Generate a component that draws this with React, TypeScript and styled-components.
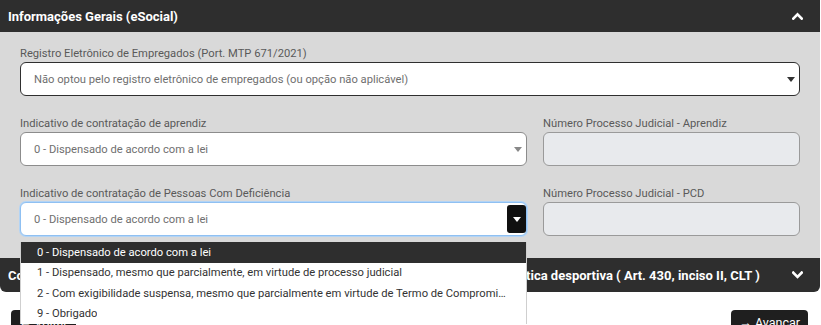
import React from "react";
import styled, { createGlobalStyle, css } from "styled-components";

const GlobalStyle = createGlobalStyle`
  html, body { margin: 0; padding: 0; background: #ffffff; }
  body { font-family: Roboto, "Liberation Sans", Arial, sans-serif; overflow: hidden; }
  * { box-sizing: border-box; }
`;

const Page = styled.div`
  width: 820px;
  display: flex;
  flex-direction: column;
`;

const Section = styled.section`
  display: flex;
  flex-direction: column;
`;

const SectionHeader = styled.div<{ $rounded?: boolean; $h: number }>`
  height: ${(p) => p.$h}px;
  background: #2e2e2e;
  color: #ffffff;
  display: flex;
  align-items: center;
  justify-content: space-between;
  padding: 0 17px 0 8px;
  ${(p) =>
    p.$rounded &&
    css`
      border-radius: 0 0 6px 6px;
    `}
`;

const HeaderTitle = styled.span`
  font-size: 13px;
  font-weight: 700;
  white-space: nowrap;
  overflow: hidden;
`;

const SectionBody = styled.div`
  background: #d9d9d9;
  padding: 14px 20px 22px 20px;
  display: flex;
  flex-direction: column;
  gap: 20px;
`;

const Row = styled.div`
  display: grid;
  grid-template-columns: 507fr 257fr;
  column-gap: 16px;
`;

const Field = styled.div`
  position: relative;
  display: flex;
  flex-direction: column;
`;

const Label = styled.label`
  font-size: 11.2px;
  line-height: 16px;
  color: #5a5a5a;
`;

const SelectBox = styled.div<{ $variant: "dark" | "normal" | "focus" }>`
  height: 34px;
  background: #ffffff;
  border-radius: 6px;
  display: flex;
  align-items: center;
  justify-content: space-between;
  padding: 0 0 0 13px;
  ${(p) =>
    p.$variant === "dark"
      ? css`
          border: 1px solid #2f2f2f;
        `
      : p.$variant === "focus"
      ? css`
          border: 1px solid #8fc0f2;
          box-shadow: 0 0 0 1px #b3d4f5;
        `
      : css`
          border: 1px solid #8c8c8c;
        `}
`;

const SelectText = styled.span`
  font-size: 11.2px;
  color: #6f6f6f;
  white-space: nowrap;
`;

const CaretWrap = styled.span<{ $color: string }>`
  display: inline-flex;
  width: 17px;
  justify-content: center;
  color: ${(p) => p.$color};
`;

const ArrowButton = styled.span`
  width: 19px;
  height: 28px;
  background: #101010;
  border-radius: 3px;
  display: inline-flex;
  align-items: center;
  justify-content: center;
  color: #ffffff;
`;

const Caret = () => (
  <svg width="8" height="5" viewBox="0 0 8 5">
    <path d="M0 0 H8 L4 5 Z" fill="currentColor" />
  </svg>
);

const TextInput = styled.div`
  height: 34px;
  background: #e8eaed;
  border: 1px solid #9a9a9a;
  border-radius: 6px;
`;

const Dropdown = styled.ul`
  position: absolute;
  top: calc(100% + 6px);
  left: 0;
  right: 0;
  margin: 0;
  padding: 0;
  list-style: none;
  background: #ffffff;
  border-left: 1px solid #cfcfcf;
  border-right: 1px solid #cfcfcf;
  z-index: 10;
`;

const Option = styled.li<{ $active?: boolean }>`
  height: 20.5px;
  display: flex;
  align-items: center;
  padding: 0 19px 0 16px;
  font-size: 11.2px;
  white-space: nowrap;
  overflow: hidden;
  color: ${(p) => (p.$active ? "#ffffff" : "#333333")};
  background: ${(p) => (p.$active ? "#2e2e2e" : "#ffffff")};
`;

const OptionText = styled.span`
  overflow: hidden;
  text-overflow: ellipsis;
`;

const Chevron = ({ up }: { up?: boolean }) => (
  <svg width="11" height="8" viewBox="0 0 11 8">
    <path
      d={up ? "M1.3 6.6 L5.5 2.4 L9.7 6.6" : "M1.3 1.6 L5.5 5.8 L9.7 1.6"}
      fill="none"
      stroke="#ffffff"
      strokeWidth="2.6"
      strokeLinecap="square"
    />
  </svg>
);

const Footer = styled.div`
  display: flex;
  justify-content: space-between;
  padding: 18px 12px 0 11px;
`;

const Button = styled.button`
  height: 28px;
  background: #1f1f1f;
  color: #ffffff;
  border: none;
  border-radius: 4px;
  font-family: Roboto, "Liberation Sans", Arial, sans-serif;
  font-size: 12.5px;
  padding: 5px 8px 0 8px;
  display: inline-flex;
  align-items: flex-start;
  gap: 4px;
`;

const options = [
  "0 - Dispensado de acordo com a lei",
  "1 - Dispensado, mesmo que parcialmente, em virtude de processo judicial",
  "2 - Com exigibilidade suspensa, mesmo que parcialmente em virtude de Termo de Compromisso de Ajustamento de Conduta (TAC)",
  "9 - Obrigado",
];

export default function App() {
  return (
    <>
      <GlobalStyle />
      <Page>
        <Section>
          <SectionHeader $h={32}>
            <HeaderTitle>Informações Gerais (eSocial)</HeaderTitle>
            <Chevron up />
          </SectionHeader>
          <SectionBody>
            <Field>
              <Label>Registro Eletrônico de Empregados (Port. MTP 671/2021)</Label>
              <SelectBox $variant="dark">
                <SelectText>
                  Não optou pelo registro eletrônico de empregados (ou opção não aplicável)
                </SelectText>
                <CaretWrap $color="#333333">
                  <Caret />
                </CaretWrap>
              </SelectBox>
            </Field>
            <Row>
              <Field>
                <Label>Indicativo de contratação de aprendiz</Label>
                <SelectBox $variant="normal">
                  <SelectText>0 - Dispensado de acordo com a lei</SelectText>
                  <CaretWrap $color="#888888">
                    <Caret />
                  </CaretWrap>
                </SelectBox>
              </Field>
              <Field>
                <Label>Número Processo Judicial - Aprendiz</Label>
                <TextInput />
              </Field>
            </Row>
            <Row>
              <Field>
                <Label>Indicativo de contratação de Pessoas Com Deficiência</Label>
                <SelectBox $variant="focus">
                  <SelectText>0 - Dispensado de acordo com a lei</SelectText>
                  <ArrowButton>
                    <Caret />
                  </ArrowButton>
                </SelectBox>
                <Dropdown>
                  {options.map((o, i) => (
                    <Option key={o} $active={i === 0}>
                      <OptionText>{o}</OptionText>
                    </Option>
                  ))}
                </Dropdown>
              </Field>
              <Field>
                <Label>Número Processo Judicial - PCD</Label>
                <TextInput />
              </Field>
            </Row>
          </SectionBody>
        </Section>
        <Section>
          <SectionHeader $h={34} $rounded>
            <HeaderTitle>
              Contratação de aprendiz por entidades educativas sem fins lucrativos ou entidade de prática desportiva ( Art. 430, inciso II, CLT )
            </HeaderTitle>
            <Chevron />
          </SectionHeader>
        </Section>
        <Footer>
          <Button>← Voltar</Button>
          <Button>→ Avançar</Button>
        </Footer>
      </Page>
    </>
  );
}
